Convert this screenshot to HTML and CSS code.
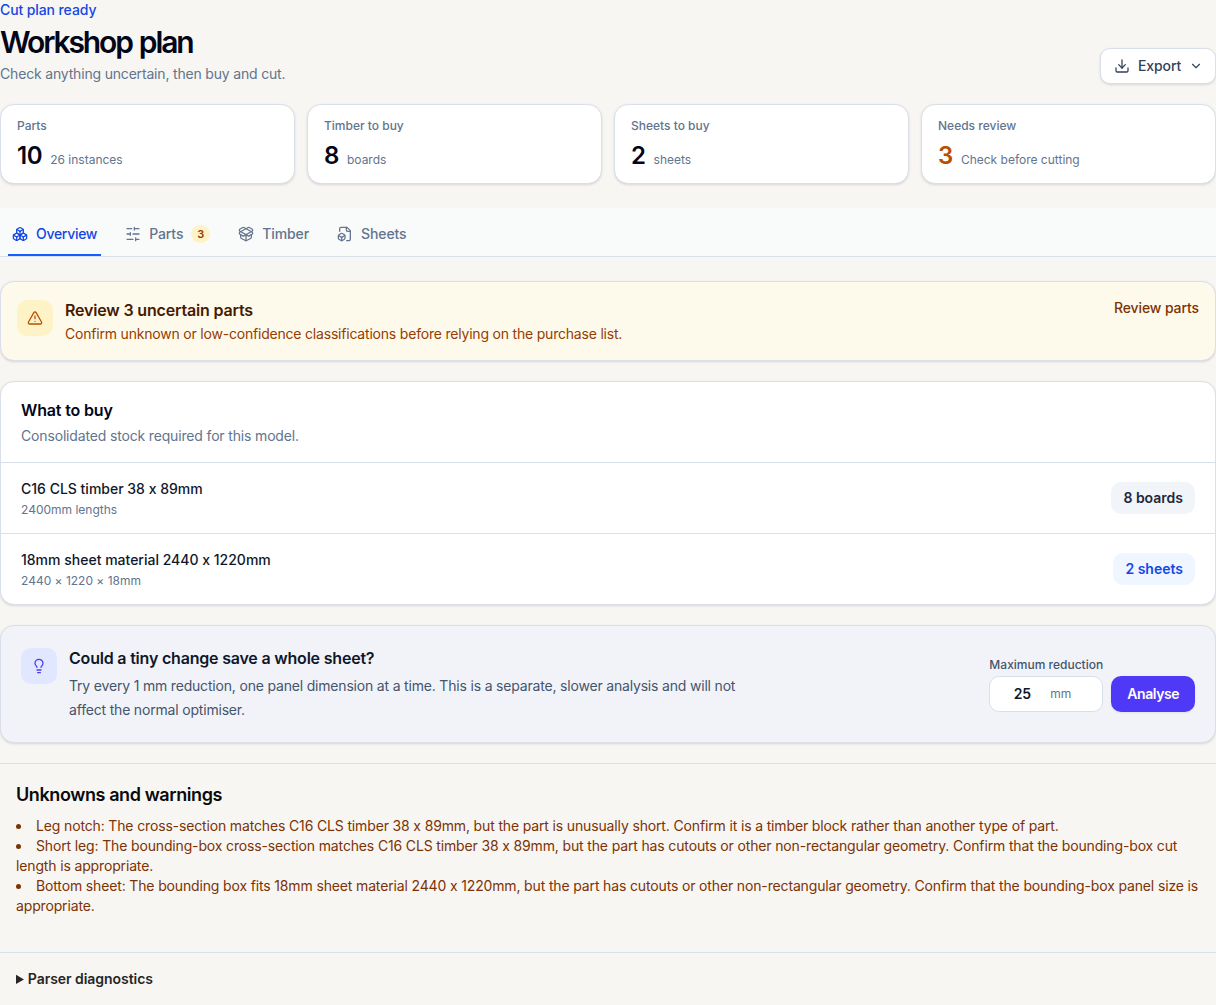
FILE: index.html
```
<!DOCTYPE html>
<html lang="en">
<head>
    <meta charset="UTF-8">
    <meta name="viewport" content="width=device-width, initial-scale=1.0">
    <title>Workshop plan</title>
    <link rel="stylesheet" href="styles.css">
</head>
<body>
    <header class="header">
        <div>
            <p class="eyebrow">Cut plan ready</p>
            <h1>Workshop plan</h1>
            <p class="subtitle">Check anything uncertain, then buy and cut.</p>
        </div>
        <button class="export">
            <svg class="icon" viewBox="0 0 24 24"><path d="M12 15V3"/><path d="M21 15v4a2 2 0 0 1-2 2H5a2 2 0 0 1-2-2v-4"/><path d="m7 10 5 5 5-5"/></svg>
            Export
            <svg class="icon icon-small" viewBox="0 0 24 24"><path d="m6 9 6 6 6-6"/></svg>
        </button>
    </header>

    <section class="stats">
        <div class="card stat">
            <p class="stat-label">Parts</p>
            <p class="stat-row"><strong>10</strong><span>26 instances</span></p>
        </div>
        <div class="card stat">
            <p class="stat-label">Timber to buy</p>
            <p class="stat-row"><strong>8</strong><span>boards</span></p>
        </div>
        <div class="card stat">
            <p class="stat-label">Sheets to buy</p>
            <p class="stat-row"><strong>2</strong><span>sheets</span></p>
        </div>
        <div class="card stat">
            <p class="stat-label">Needs review</p>
            <p class="stat-row review"><strong>3</strong><span>Check before cutting</span></p>
        </div>
    </section>

    <nav class="tabs">
        <a class="tab active">
            <svg class="icon" viewBox="0 0 24 24"><path d="M2.97 12.92A2 2 0 0 0 2 14.63v3.24a2 2 0 0 0 .97 1.71l3 1.8a2 2 0 0 0 2.06 0L12 19v-5.5l-5-3-4.03 2.42Z"/><path d="m7 16.5-4.74-2.85"/><path d="m7 16.5 5-3"/><path d="M7 16.5v5.17"/><path d="M12 13.5V19l3.97 2.38a2 2 0 0 0 2.06 0l3-1.8a2 2 0 0 0 .97-1.71v-3.24a2 2 0 0 0-.97-1.71L17 10.5l-5 3Z"/><path d="m17 16.5-5-3"/><path d="m17 16.5 4.74-2.85"/><path d="M17 16.5v5.17"/><path d="M7.97 4.42A2 2 0 0 0 7 6.13v4.37l5 3 5-3V6.13a2 2 0 0 0-.97-1.71l-3-1.8a2 2 0 0 0-2.06 0l-3 1.8Z"/><path d="M12 8 7.26 5.15"/><path d="m12 8 4.74-2.85"/><path d="M12 13.5V8"/></svg>
            Overview
        </a>
        <a class="tab">
            <svg class="icon" viewBox="0 0 24 24"><path d="M21 4h-7M10 4H3M21 12h-9M8 12H3M21 20h-5M12 20H3M14 2v4M8 10v4M16 18v4"/></svg>
            Parts
            <span class="badge">3</span>
        </a>
        <a class="tab">
            <svg class="icon" viewBox="0 0 24 24"><path d="M12 22v-9"/><path d="M15.17 2.21a1.67 1.67 0 0 1 1.63 0L21 4.57a1.93 1.93 0 0 1 0 3.36L8.82 14.79a1.655 1.655 0 0 1-1.64 0L3 12.43a1.93 1.93 0 0 1 0-3.36z"/><path d="M20 13v3.87a2.06 2.06 0 0 1-1.11 1.83l-6 3.08a1.93 1.93 0 0 1-1.78 0l-6-3.08A2.06 2.06 0 0 1 4 16.87V13"/><path d="M21 12.43a1.93 1.93 0 0 0 0-3.36L8.83 2.2a1.64 1.64 0 0 0-1.63 0L3 4.57a1.93 1.93 0 0 0 0 3.36l12.18 6.86a1.636 1.636 0 0 0 1.63 0z"/></svg>
            Timber
        </a>
        <a class="tab">
            <svg class="icon" viewBox="0 0 24 24"><path d="M14.5 22H18a2 2 0 0 0 2-2V7l-5-5H6a2 2 0 0 0-2 2v4"/><path d="M14 2v4a2 2 0 0 0 2 2h4"/><path d="M3 13.1a2 2 0 0 0-1 1.76v3.24a2 2 0 0 0 .97 1.78L6 21.7a2 2 0 0 0 2.03.01L11 19.9a2 2 0 0 0 1-1.76V14.9a2 2 0 0 0-.97-1.78L8 11.3a2 2 0 0 0-2.03-.01Z"/><path d="M7 17v5"/><path d="M11.7 14.2 7 17l-4.7-2.8"/></svg>
            Sheets
        </a>
    </nav>

    <section class="card notice">
        <div class="tile tile-amber">
            <svg class="icon" viewBox="0 0 24 24"><path d="m21.73 18-8-14a2 2 0 0 0-3.48 0l-8 14A2 2 0 0 0 4 21h16a2 2 0 0 0 1.73-3"/><path d="M12 9v4"/><path d="M12 17h.01"/></svg>
        </div>
        <div class="grow">
            <h2>Review 3 uncertain parts</h2>
            <p>Confirm unknown or low-confidence classifications before relying on the purchase list.</p>
        </div>
        <a class="notice-link">Review parts</a>
    </section>

    <section class="card buy">
        <div class="buy-head">
            <h2>What to buy</h2>
            <p>Consolidated stock required for this model.</p>
        </div>
        <div class="buy-row">
            <div>
                <p class="buy-name">C16 CLS timber 38 x 89mm</p>
                <p class="buy-size">2400mm lengths</p>
            </div>
            <span class="pill">8 boards</span>
        </div>
        <div class="buy-row">
            <div>
                <p class="buy-name">18mm sheet material 2440 x 1220mm</p>
                <p class="buy-size">2440 × 1220 × 18mm</p>
            </div>
            <span class="pill pill-blue">2 sheets</span>
        </div>
    </section>

    <section class="card tip">
        <div class="tile tile-indigo">
            <svg class="icon" viewBox="0 0 24 24"><path d="M15 14c.2-1 .7-1.7 1.5-2.5 1-.9 1.5-2.2 1.5-3.5A6 6 0 0 0 6 8c0 1 .2 2.2 1.5 3.5.7.7 1.3 1.5 1.5 2.5"/><path d="M9 18h6"/><path d="M10 22h4"/></svg>
        </div>
        <div class="grow">
            <h2>Could a tiny change save a whole sheet?</h2>
            <p class="tip-text">Try every 1 mm reduction, one panel dimension at a time. This is a separate, slower analysis and will not affect the normal optimiser.</p>
        </div>
        <div class="tip-form">
            <div>
                <label for="reduction">Maximum reduction</label>
                <div class="field">
                    <input type="text" id="reduction" value="25">
                    <span>mm</span>
                </div>
            </div>
            <button class="analyse">Analyse</button>
        </div>
    </section>

    <section class="warnings">
        <h2>Unknowns and warnings</h2>
        <ul>
            <li>Leg notch: The cross-section matches C16 CLS timber 38 x 89mm, but the part is unusually short. Confirm it is a timber block rather than another type of part.</li>
            <li>Short leg: The bounding-box cross-section matches C16 CLS timber 38 x 89mm, but the part has cutouts or other non-rectangular geometry. Confirm that the bounding-box cut length is appropriate.</li>
            <li>Bottom sheet: The bounding box fits 18mm sheet material 2440 x 1220mm, but the part has cutouts or other non-rectangular geometry. Confirm that the bounding-box panel size is appropriate.</li>
        </ul>
    </section>

    <details class="diagnostics">
        <summary><span>Parser diagnostics</span></summary>
    </details>
</body>
</html>
```
FILE: styles.css
```
*{
    box-sizing: border-box;
    margin: 0;
    padding: 0;
}
body{
    font-family: Inter, "Liberation Sans", sans-serif;
    font-size: 14px;
    line-height: 20px;
    letter-spacing: -0.16px;
    font-feature-settings: "calt" 0;
    color: #020618;
    background-color: #f8f6f2;
}
button,
input{
    font: inherit;
    letter-spacing: -0.1px;
}
h2{
    font-size: 16px;
    line-height: 24px;
    font-weight: 600;
}
.icon{
    width: 16px;
    height: 16px;
    flex: none;
    fill: none;
    stroke: currentColor;
    stroke-width: 1.9;
    stroke-linecap: round;
    stroke-linejoin: round;
}
.icon-small{
    width: 14px;
    height: 14px;
}
.grow{
    flex: 1;
}
.card{
    background-color: #fff;
    border: 1px solid #d9e0e9;
    border-radius: 14px;
    box-shadow: 0 1px 3px rgba(0, 0, 0, 0.1), 0 1px 2px -1px rgba(0, 0, 0, 0.1);
}

/* header */
.header{
    display: flex;
    justify-content: space-between;
    align-items: flex-end;
}
.eyebrow{
    font-weight: 500;
    letter-spacing: -0.1px;
    color: #1447e6;
}
h1{
    margin: 4px 0;
    font-size: 30px;
    line-height: 36px;
    font-weight: 640;
    letter-spacing: -2.1px;
    word-spacing: 1.5px;
}
.subtitle{
    letter-spacing: -0.18px;
    color: #62748e;
}
.export{
    display: flex;
    align-items: center;
    gap: 8px;
    width: 116px;
    height: 36px;
    padding: 0 12px 0 13px;
    font-weight: 500;
    color: #314158;
    background-color: #fff;
    border: 1px solid #d9e0e9;
    border-radius: 10px;
    box-shadow: 0 1px 3px rgba(0, 0, 0, 0.1), 0 1px 2px -1px rgba(0, 0, 0, 0.1);
}

/* stat cards */
.stats{
    display: grid;
    grid-template-columns: repeat(4, 1fr);
    gap: 12px;
    margin-top: 20px;
}
.stat{
    height: 80px;
    padding: 13px 16px 11px;
    letter-spacing: 0;
}
.stat-label{
    font-size: 12px;
    line-height: 16px;
    font-weight: 500;
    color: #62748e;
}
.stat-row{
    display: flex;
    align-items: baseline;
    gap: 8px;
    margin-top: 6px;
    font-size: 12px;
    color: #62748e;
}
.stat-row strong{
    font-size: 24px;
    line-height: 32px;
    font-weight: 640;
    letter-spacing: -0.4px;
    color: #020618;
}
.review strong{
    color: #bb4d00;
}

/* tabs */
.tabs{
    display: flex;
    gap: 20px;
    height: 49px;
    margin-top: 24px;
    padding: 0 8px;
    background-color: #f9fbfa;
    border-bottom: 1px solid #d9e0e9;
}
.tab{
    display: flex;
    align-items: center;
    gap: 8px;
    padding: 6px 4px 0;
    font-weight: 500;
    letter-spacing: -0.1px;
    color: #62748e;
    border-bottom: 2px solid transparent;
}
.tab.active{
    letter-spacing: -0.3px;
    color: #1447e6;
    border-color: #155dfc;
}
.badge{
    padding: 1px 6px;
    font-size: 11px;
    line-height: 16px;
    font-weight: 600;
    color: #973c00;
    background-color: #fef3c6;
    border-radius: 9px;
}

/* review notice */
.tile{
    display: flex;
    align-items: center;
    justify-content: center;
    flex: none;
    width: 36px;
    height: 36px;
    margin-top: 2px;
    border-radius: 10px;
}
.tile-amber{
    color: #bb4d00;
    background-color: #fef3c6;
}
.tile-indigo{
    color: #4f39f6;
    background-color: #e0e7ff;
}
.notice{
    display: flex;
    gap: 12px;
    margin-top: 24px;
    padding: 16px;
    letter-spacing: -0.2px;
    color: #973c00;
    background-color: #fefaeb;
}
.notice h2{
    margin-bottom: 2px;
    letter-spacing: -0.17px;
    color: #461901;
}
.notice-link{
    font-weight: 500;
    letter-spacing: -0.1px;
    color: #7b3306;
}

/* what to buy */
.buy{
    margin-top: 20px;
}
.buy-head{
    padding: 16px 20px;
}
.buy-head p{
    margin-top: 4px;
    color: #62748e;
}
.buy-row{
    display: flex;
    align-items: center;
    justify-content: space-between;
    height: 71px;
    padding: 0 20px;
    letter-spacing: 0;
    border-top: 1px solid #d9e0e9;
}
.buy-name{
    font-weight: 500;
    color: #0f172b;
}
.buy-size{
    margin-top: 3px;
    font-size: 12px;
    line-height: 16px;
    color: #62748e;
}
.pill{
    padding: 6px 12px;
    font-weight: 600;
    color: #1d293d;
    background-color: #f1f5f9;
    border-radius: 10px;
}
.pill-blue{
    color: #1447e6;
    background-color: #eff6ff;
}

/* tiny change tip */
.tip{
    display: flex;
    gap: 12px;
    margin-top: 20px;
    padding: 20px;
    letter-spacing: -0.2px;
    color: #0f172b;
    background-color: #f2f3f9;
}
.tip-text{
    max-width: 672px;
    margin-top: 4px;
    line-height: 24px;
    letter-spacing: -0.185px;
    color: #45556c;
}
.tip-form{
    display: flex;
    align-items: flex-end;
    align-self: center;
    gap: 8px;
}
.tip-form label{
    display: block;
    margin-bottom: 3px;
    font-size: 12px;
    line-height: 16px;
    font-weight: 500;
    letter-spacing: 0;
    color: #45556c;
}
.field{
    display: flex;
    align-items: center;
    width: 114px;
    height: 36px;
    padding: 0 12px;
    font-size: 12px;
    letter-spacing: 0;
    color: #62748e;
    background-color: #fff;
    border: 1px solid #d9e0e9;
    border-radius: 10px;
}
.field input{
    width: 40px;
    margin-right: 8px;
    font-size: 14px;
    font-weight: 600;
    text-align: center;
    color: #0f172b;
    background: none;
    border: none;
}
.field span{
    padding-top: 1px;
}
.analyse{
    height: 36px;
    padding: 0 16px;
    font-weight: 600;
    letter-spacing: -0.45px;
    color: #fff;
    background-color: #4f39f6;
    border: none;
    border-radius: 10px;
    box-shadow: 0 1px 2px rgba(0, 0, 0, 0.08);
}

/* warnings */
.warnings{
    margin-top: 20px;
    padding: 17px 16px 36px;
    border-top: 1px solid #d9e0e9;
}
.warnings h2{
    font-size: 18px;
    line-height: 28px;
    letter-spacing: -0.4px;
    color: #0a0a0a;
}
.warnings ul{
    margin-top: 7px;
    list-style-position: inside;
    letter-spacing: -0.148px;
    color: #7b3306;
}
.diagnostics{
    padding: 16px;
    color: #262626;
    border-top: 1px solid #d9e0e9;
}
.diagnostics summary{
    font-weight: 600;
    letter-spacing: -0.05px;
}
.diagnostics span{
    margin-left: -3px;
}
```
